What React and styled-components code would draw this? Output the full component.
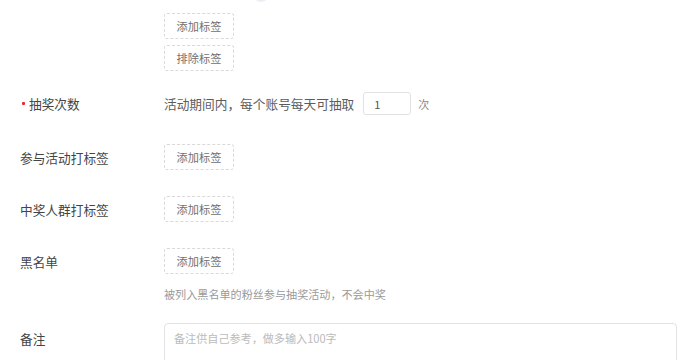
import React from "react";
import styled, { createGlobalStyle } from "styled-components";

const Global = createGlobalStyle`
  html, body { margin: 0; padding: 0; background: #fff; }
  body { font-family: "Noto Sans CJK SC", "Noto Sans", sans-serif; overflow: hidden; }
`;

const Page = styled.div`
  width: 700px;
  height: 360px;
  position: relative;
  overflow: hidden;
  background: #fff;
`;

const TopArc = styled.div`
  position: absolute;
  left: 253px;
  top: -14px;
  width: 16px;
  height: 16px;
  border-radius: 50%;
  background: #eceef6;
`;

const Row = styled.div`
  display: grid;
  grid-template-columns: 144px 1fr;
  align-items: start;
  padding-left: 20px;
  margin-top: ${(p) => p.$mt || 0}px;
`;

const Label = styled.div`
  height: ${(p) => p.$h || 26}px;
  display: flex;
  align-items: center;
  font-size: 12.7px;
  color: #444;
  white-space: nowrap;
`;

const Star = styled.span`
  display: inline-block;
  width: 3px;
  height: 3px;
  background: #f5222d;
  border-radius: 1px;
  margin: 0 4px 0 2px;
`;

const Control = styled.div`
  display: flex;
  flex-direction: column;
  align-items: flex-start;
  gap: ${(p) => p.$gap || 0}px;
`;

const TagButton = styled.button`
  box-sizing: border-box;
  width: 70px;
  height: 26px;
  padding: 0;
  border: 1px dashed #d9d9d9;
  border-radius: 3px;
  background: #fff;
  font-family: inherit;
  font-size: 11.2px;
  color: #707070;
  cursor: pointer;
`;

const Inline = styled.div`
  display: flex;
  align-items: center;
  height: 23px;
  font-size: 12.7px;
  color: #5c5c5c;
  white-space: nowrap;
`;

const NumInput = styled.input`
  box-sizing: border-box;
  width: 48px;
  height: 23px;
  margin: 0 7px 0 9px;
  padding: 0 10px;
  border: 1px solid #e2e2e2;
  border-radius: 3px;
  font-family: inherit;
  font-size: 11px;
  color: #555;
  outline: none;
`;

const Unit = styled.span`
  font-size: 11px;
  color: #888;
`;

const Hint = styled.div`
  margin-top: 12px;
  font-size: 11.1px;
  line-height: 16px;
  color: #9a9a9a;
  white-space: nowrap;
`;

const Remark = styled.textarea`
  box-sizing: border-box;
  width: 513px;
  height: 70px;
  padding: 6px 9px;
  border: 1px solid #e3e3e3;
  border-radius: 4px;
  resize: none;
  font-family: inherit;
  font-size: 11.1px;
  line-height: 16px;
  color: #555;
  outline: none;
  &::placeholder { color: #bbb; }
`;

export default function App() {
  return (
    <>
      <Global />
      <Page>
        <TopArc />
        <Row $mt={13}>
          <Label />
          <Control $gap={6}>
            <TagButton>添加标签</TagButton>
            <TagButton>排除标签</TagButton>
          </Control>
        </Row>
        <Row $mt={21}>
          <Label $h={23}>
            <Star />抽奖次数
          </Label>
          <Inline>
            活动期间内，每个账号每天可抽取
            <NumInput defaultValue="1" />
            <Unit>次</Unit>
          </Inline>
        </Row>
        <Row $mt={29}>
          <Label>参与活动打标签</Label>
          <Control>
            <TagButton>添加标签</TagButton>
          </Control>
        </Row>
        <Row $mt={26}>
          <Label>中奖人群打标签</Label>
          <Control>
            <TagButton>添加标签</TagButton>
          </Control>
        </Row>
        <Row $mt={26}>
          <Label>黑名单</Label>
          <Control>
            <TagButton>添加标签</TagButton>
            <Hint>被列入黑名单的粉丝参与抽奖活动，不会中奖</Hint>
          </Control>
        </Row>
        <Row $mt={21}>
          <Label $h={30}>备注</Label>
          <Remark placeholder="备注供自己参考，做多输入100字" />
        </Row>
      </Page>
    </>
  );
}
